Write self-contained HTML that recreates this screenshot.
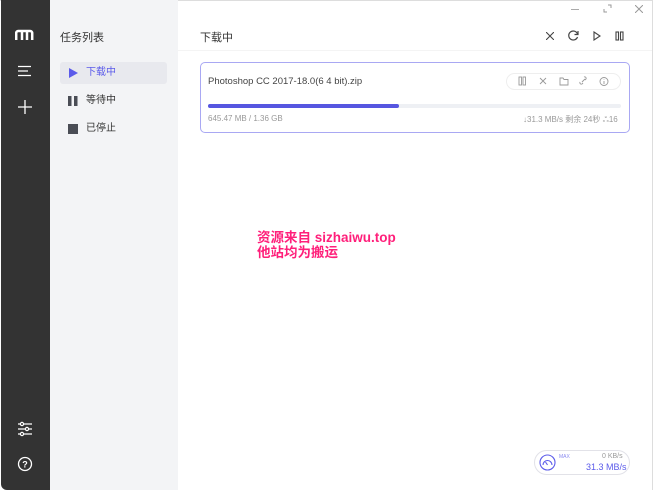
<!DOCTYPE html>
<html><head><meta charset="utf-8"><style>
*{margin:0;padding:0;box-sizing:border-box}
body{width:653px;height:490px;background:#fff;font-family:"Liberation Sans","Noto Sans CJK SC",sans-serif;position:relative;overflow:hidden}
.side{position:absolute;left:1px;top:0;width:49px;height:490px;background:#333;border-radius:0 0 0 6px}
.mid{position:absolute;left:50px;top:0;width:128px;height:490px;background:#f3f4f6}
.abs{position:absolute}
.t{font-size:11px;color:#333}
.item{position:absolute;left:60px;width:107px;height:22px;font-size:10px;color:#333;line-height:22px;padding-left:26px}
svg{position:absolute}
</style></head><body>
<div style="position:absolute;left:0;top:0;width:653px;height:1px;background:#ddd"></div>
<div style="position:absolute;right:0;top:0;width:1px;height:490px;background:#ddd"></div>
<div class="side"></div>
<div class="mid"></div>
<svg style="left:15px;top:29px" width="20" height="12" viewBox="0 0 20 12"><path d="M1.2 11V4a2 2 0 0 1 2-2h12a2 2 0 0 1 2 2v7M7 2v9M12 2v9" stroke="#fff" stroke-width="2.5" fill="none"/></svg>
<svg style="left:18px;top:65px" width="14" height="12"><path d="M0 1.5h13M0 6h10M0 10.5h13" stroke="#fff" stroke-width="1.3"/></svg>
<svg style="left:18px;top:100px" width="14" height="14"><path d="M7 0v14M0 7h14" stroke="#fff" stroke-width="1.3"/></svg>
<svg style="left:17px;top:421px" width="16" height="16" fill="none" stroke="#fff" stroke-width="1.2"><path d="M1 3h14M1 8h14M1 13h14"/><circle cx="5" cy="3" r="1.6" fill="#333"/><circle cx="10" cy="8" r="1.6" fill="#333"/><circle cx="5" cy="13" r="1.6" fill="#333"/></svg>
<svg style="left:17px;top:456px" width="16" height="16"><circle cx="8" cy="8" r="6.5" stroke="#fff" stroke-width="1.3" fill="none"/><text x="8" y="11.5" font-size="9" font-weight="bold" fill="#fff" text-anchor="middle" font-family="Liberation Sans">?</text></svg>
<div class="abs t" style="left:60px;top:29px">任务列表</div>
<div class="item" style="top:62px;background:#e8e9ee;border-radius:3px;color:#5b5bea">下载中</div>
<svg style="left:69px;top:68px" width="9" height="10"><path d="M0 0L9 5L0 10Z" fill="#5b5bea"/></svg>
<div class="item" style="top:90px">等待中</div>
<svg style="left:68px;top:96px" width="10" height="10"><rect x="0" y="0" width="3.5" height="10" fill="#4a4d55"/><rect x="6" y="0" width="3.5" height="10" fill="#4a4d55"/></svg>
<div class="item" style="top:118px">已停止</div>
<svg style="left:68px;top:124px" width="10" height="10"><rect width="10" height="10" fill="#4a4d55"/></svg>
<div class="abs" style="left:571px;top:9px;width:8px;height:1px;background:#aaa"></div>
<svg style="left:603px;top:4px" width="9" height="9" stroke="#999" fill="none"><path d="M1 5v3h3M5 1h3v3"/></svg>
<svg style="left:635px;top:5px" width="8" height="8" stroke="#999"><path d="M0 0L8 8M8 0L0 8"/></svg>
<div class="abs t" style="left:200px;top:29px">下载中</div>
<svg style="left:546px;top:32px" width="8" height="8" stroke="#444" stroke-width="1.1"><path d="M0 0L8 8M8 0L0 8"/></svg>
<svg style="left:568px;top:30px" width="11" height="11" fill="none" stroke="#444" stroke-width="1.2"><path d="M9.5 4A4.5 4.5 0 1 0 9.5 7"/><path d="M10 1v3.5H6.5"/></svg>
<svg style="left:593px;top:31px" width="8" height="10" fill="none" stroke="#444" stroke-width="1.1"><path d="M1 1L7 5L1 9Z"/></svg>
<svg style="left:615px;top:31px" width="9" height="10" fill="none" stroke="#444" stroke-width="1.1"><rect x="1" y="1" width="2.5" height="8"/><rect x="5.5" y="1" width="2.5" height="8"/></svg>
<div class="abs" style="left:178px;top:50px;width:474px;height:1px;background:#f4f4f4"></div>
<div class="abs" style="left:200px;top:62px;width:430px;height:71px;border:1px solid #a9a8f3;border-radius:5px"></div>
<div class="abs" style="left:208px;top:76px;font-size:9.5px;color:#444">Photoshop CC 2017-18.0(6 4 bit).zip</div>
<div class="abs" style="left:506px;top:73px;width:115px;height:17px;border:1px solid #eee;border-radius:9px"></div>
<svg style="left:518px;top:76px" width="100" height="11" fill="none" stroke="#999" stroke-width="0.9"><rect x="1" y="1" width="2.5" height="8"/><rect x="5" y="1" width="2.5" height="8"/><path d="M22 2l6 6M28 2l-6 6"/><path d="M42 2h3l1 1.5h4v5.5h-8z"/><path d="M64 6l3-3M62 6a1.5 1.5 0 0 0 2 2l1-1M67 4l1-1a1.5 1.5 0 0 0-2-2"/><circle cx="86" cy="5.5" r="4"/><path d="M86 5v3M86 3.5v.5"/></svg>
<div class="abs" style="left:208px;top:104px;width:413px;height:4px;background:#eef0f4;border-radius:2px"></div>
<div class="abs" style="left:208px;top:104px;width:191px;height:4px;background:#5656e0;border-radius:2px"></div>
<div class="abs" style="left:208px;top:114px;font-size:8px;color:#999">645.47 MB / 1.36 GB</div>
<div class="abs" style="left:523px;top:114px;font-size:8px;color:#999">↓31.3 MB/s 剩余 24秒 ஃ16</div>
<div class="abs" style="left:257px;top:230px;font-size:13.5px;font-weight:bold;color:#ff1f7a;line-height:15px">资源来自 sizhaiwu.top<br>他站均为搬运</div>
<div class="abs" style="left:534px;top:450px;width:96px;height:25px;border:1px solid #e2e2e8;border-radius:13px"></div>
<svg style="left:539px;top:454px" width="17" height="17" fill="none" stroke="#5b5bea" stroke-width="1.1"><circle cx="8.5" cy="8.5" r="7.5"/><path d="M4 11a4.5 4.5 0 1 1 9 0"/><path d="M8.5 11L6.5 8"/></svg>
<div class="abs" style="left:559px;top:454px;font-size:5px;color:#8b8bf0">MAX</div>
<div class="abs" style="left:602px;top:453px;font-size:7px;color:#999">0 KB/s</div>
<div class="abs" style="left:586px;top:462px;font-size:9px;color:#5b5bea">31.3 MB/s</div>
</body></html>
